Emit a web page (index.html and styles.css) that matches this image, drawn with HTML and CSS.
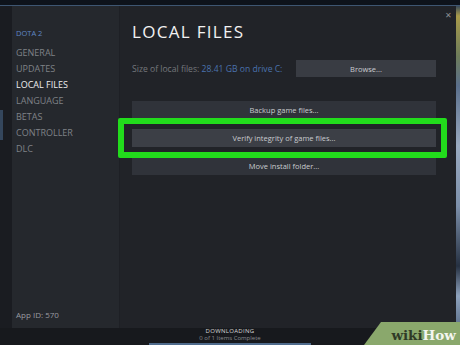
FILE: index.html
```html
<!DOCTYPE html>
<html>
<head>
<meta charset="utf-8">
<link rel="stylesheet" href="styles.css">
</head>
<body>
<div class="screen">
  <div class="topbar"></div>
  <div class="window">
    <div class="edge-left"><span class="edge-tab"></span></div>
    <nav class="sidebar">
      <div class="game">DOTA 2</div>
      <ul class="menu">
        <li>GENERAL</li>
        <li>UPDATES</li>
        <li class="active">LOCAL FILES</li>
        <li>LANGUAGE</li>
        <li>BETAS</li>
        <li>CONTROLLER</li>
        <li>DLC</li>
      </ul>
      <div class="appid">App ID: 570</div>
    </nav>
    <main class="content">
      <span class="close">&#x2715;</span>
      <h1 class="title">LOCAL FILES</h1>
      <div class="size-row">
        <span class="size-text">Size of local files: <span class="size-val">28.41 GB on drive C:</span></span>
        <button class="btn browse">Browse...</button>
      </div>
      <div class="actions">
        <button class="btn action">Backup game files...</button>
        <div class="highlight-wrap">
          <button class="btn action verify">Verify integrity of game files...</button>
          <span class="highlight"></span>
        </div>
        <button class="btn action">Move install folder...</button>
      </div>
    </main>
    <div class="art"></div>
  </div>
  <footer class="footer">
    <div class="dl-title">DOWNLOADING</div>
    <div class="dl-sub">0 of 1 Items Complete</div>
    <div class="dl-bar"></div>
  </footer>
  <div class="wikihow"><span class="wiki">wiki</span><span class="how">How</span></div>
</div>
</body>
</html>
```
FILE: styles.css
```css
* { box-sizing: border-box; }
html, body { margin: 0; padding: 0; }
body {
  width: 460px;
  height: 345px;
  overflow: hidden;
  background: #12161d;
  font-family: "Open Sans", "Noto Sans", sans-serif;
}
.screen {
  position: relative;
  width: 460px;
  height: 345px;
  display: flex;
  flex-direction: column;
}
.topbar {
  height: 6px;
  background: #0e131b;
  border-bottom: 1px solid #3e5672;
  flex: none;
}
.window {
  display: flex;
  height: 322px;
  flex: none;
}
.edge-left {
  width: 12px;
  background: #1a1c21;
  position: relative;
}
.edge-tab {
  position: absolute;
  left: 0;
  top: 104px;
  width: 3px;
  height: 30px;
  background: #34465c;
}
.sidebar {
  width: 108px;
  background: #25282d;
  display: flex;
  flex-direction: column;
  padding: 19px 0 5px 4px;
  border-right: 1px solid #1e2025;
}
.game {
  font-size: 7.5px;
  line-height: 16px;
  color: #5f86c4;
  margin-bottom: 4px;
}
.menu {
  list-style: none;
  margin: 0;
  padding: 0;
  flex: 1;
}
.menu li {
  font-size: 9px;
  line-height: 16px;
  color: #7f8287;
}
.menu li.active { color: #eeeeee; }
.appid {
  font-size: 8px;
  line-height: 16px;
  color: #9a9ca0;
}
.content {
  position: relative;
  flex: 1;
  background: #212328;
  padding: 16px 20px 0 12px;
}
.close {
  position: absolute;
  right: 4px;
  top: 3px;
  font-size: 8px;
  color: #8b8d91;
}
.title {
  margin: 0;
  font-size: 17px;
  line-height: 20px;
  font-weight: 400;
  letter-spacing: 1.3px;
  color: #f2f2f2;
}
.size-row {
  margin-top: 18px;
  height: 17px;
  display: flex;
  align-items: center;
  justify-content: space-between;
}
.size-text {
  font-size: 8.6px;
  color: #74777c;
}
.size-val { color: #4a72ad; }
.btn {
  border: 0;
  margin: 0;
  padding: 0;
  font-family: inherit;
  font-size: 7.5px;
  color: #c9cbcf;
  display: flex;
  align-items: center;
  justify-content: center;
}
.browse {
  width: 140px;
  height: 17px;
  background: #393c43;
}
.actions {
  margin-top: 24px;
  display: flex;
  flex-direction: column;
  gap: 10px;
}
.action {
  width: 100%;
  height: 18px;
  background: #30333a;
}
.verify { background: #3c3f46; }
.highlight-wrap { position: relative; }
.highlight {
  position: absolute;
  left: -14px;
  right: -11px;
  top: -11px;
  bottom: -11px;
  border: 6px solid #22dc1c;
  border-radius: 2px;
}
.art {
  width: 4px;
  background: linear-gradient(180deg, #3a4a5a 0px, #a89a4a 10px, #6e7c5a 50px, #5a6f8c 80px, #9aaac0 140px, #7d90ab 200px, #263142 260px, #8ea2bd 290px, #5b6f8a 322px);
}
.footer {
  flex: 1;
  background: #17191d;
  display: flex;
  flex-direction: column;
  align-items: center;
}
.dl-title {
  font-size: 6px;
  line-height: 7px;
  color: #d8d8d8;
  letter-spacing: 0.3px;
}
.dl-sub {
  font-size: 6px;
  line-height: 7px;
  color: #8a8c90;
}
.dl-bar {
  width: 162px;
  height: 2px;
  margin-top: 1px;
  background: #4f6b8c;
}
.wikihow {
  position: absolute;
  right: 0;
  bottom: 0;
  width: 96px;
  height: 23px;
  background: #8aa86c;
  clip-path: polygon(17px 0, 100% 0, 100% 100%, 0 100%);
  display: flex;
  align-items: flex-end;
  justify-content: flex-end;
  padding: 0 4px 1px 0;
  font-family: "DejaVu Serif", "Liberation Serif", serif;
  font-weight: bold;
  font-size: 13.5px;
  line-height: 17px;
}
.wiki { color: #2f3a26; }
.how { color: #f4f6f0; }
```
